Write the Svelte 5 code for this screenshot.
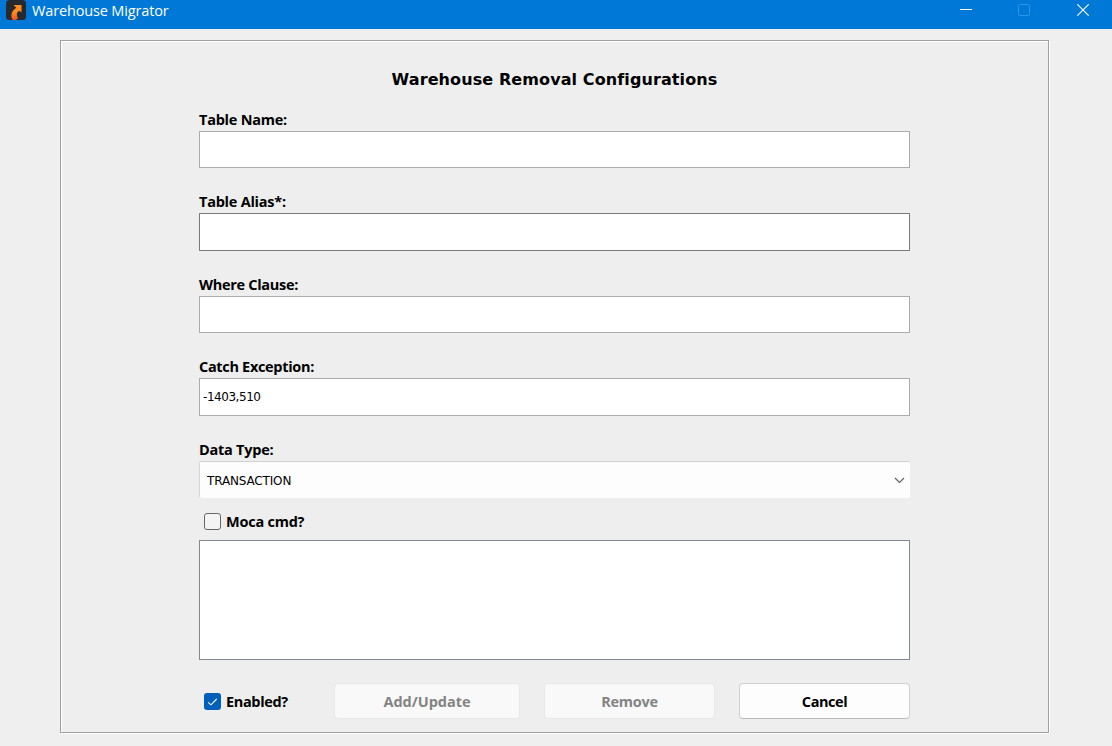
<script>
  const fields = [
    { label: 'Table Name:', value: '', height: 37, tone: '#ababab', spacing: -0.24 },
    { label: 'Table Alias*:', value: '', height: 38, tone: '#7a7a7a', spacing: -0.24 },
    { label: 'Where Clause:', value: '', height: 37, tone: '#ababab', spacing: -0.3 },
    { label: 'Catch Exception:', value: '-1403,510', height: 38, tone: '#ababab', spacing: -0.32 }
  ];
</script>

<div class="window">
  <header>
    <svg class="logo" width="20" height="20" viewBox="0 0 20 20">
      <defs>
        <linearGradient id="arrow" x1="0" y1="0" x2="0" y2="1">
          <stop offset="0.5" stop-color="#ff8a1e" />
          <stop offset="1" stop-color="#f4511e" />
        </linearGradient>
      </defs>
      <rect width="20" height="20" rx="3.5" fill="#252a31" />
      <path d="M7.5 5H15.5V12.5L13.3 10.7C10.5 12.3 10.2 14.5 12 18.5L9.3 20H7C4.5 17.5 4.5 11.5 10.3 7.8Z" fill="url(#arrow)" />
    </svg>
    <span class="app-name">Warehouse Migrator</span>
    <div class="controls">
      <svg width="12" height="12" viewBox="0 0 12 12"><path d="M0 5.5H12" stroke="#fff" /></svg>
      <svg width="12" height="12" viewBox="0 0 12 12"><rect x=".5" y=".5" width="11" height="11" rx="1" fill="none" stroke="#3395e1" /></svg>
      <svg width="12" height="12" viewBox="0 0 12 12"><path d="M.3 .3L11.7 11.7M11.7 .3L.3 11.7" stroke="#fff" stroke-width="1.1" /></svg>
    </div>
  </header>

  <main>
    <h1>Warehouse Removal Configurations</h1>
    <form>
      {#each fields as field}
        <div class="group">
          <span class="label" style:letter-spacing="{field.spacing}px">{field.label}</span>
          <div class="field" style:height="{field.height}px" style:border-color={field.tone}>{field.value}</div>
        </div>
      {/each}
      <div class="group last">
        <span class="label">Data Type:</span>
        <div class="combo">
          <span>TRANSACTION</span>
          <svg width="11" height="7" viewBox="0 0 11 7"><path d="M1 1L5.5 5.5L10 1" fill="none" stroke="#5c5c5c" stroke-width="1.1" /></svg>
        </div>
      </div>
      <div class="check moca"><i></i><span class="label">Moca cmd?</span></div>
      <div class="area"></div>
      <div class="actions">
        <div class="check enabled">
          <i class="on"><svg width="17" height="17" viewBox="0 0 17 17"><path d="M4.2 9.3L7 11.8L12.7 6" fill="none" stroke="#fff" stroke-width="1.1" /></svg></i>
          <span class="label">Enabled?</span>
        </div>
        <button type="button" class="add" disabled>Add/Update</button>
        <button type="button" disabled>Remove</button>
        <button type="button" class="cancel">Cancel</button>
      </div>
    </form>
  </main>
</div>

<style>
  :global(body) { background: #efefef; }
  * { box-sizing: border-box; }
  .window { width: 1112px; height: 746px; overflow: hidden; background: #efefef; color: #000; font-family: "Open Sans", "Noto Sans", sans-serif; }
  header { height: 29px; background: #0078d7; display: flex; align-items: flex-start; padding-left: 6px; }
  .logo { display: block; }
  .app-name { margin-left: 6px; color: #fff; font-size: 14.5px; line-height: 22px; letter-spacing: -.15px; white-space: nowrap; }
  .controls { margin-left: auto; display: flex; gap: 47px; padding: 4px 23px 0 0; }
  .controls svg { display: block; }
  .controls svg:first-child { margin-right: -1px; }
  main { width: 989px; height: 693px; margin: 11px 0 0 60px; border: 1px solid #a0a0a0; background: #eee; box-shadow: inset 1px 1px #fff, 1px 1px #fff; }
  h1 { margin: 0; height: 66px; padding-top: 29px; font: bold 16px/20px "DejaVu Sans", sans-serif; letter-spacing: .1px; text-align: center; }
  form { width: 711px; margin-left: 138px; }
  .group { margin-bottom: 21px; }
  .label { display: block; height: 24px; font-weight: 700; font-size: 14.5px; line-height: 26px; letter-spacing: -.24px; white-space: nowrap; }
  .check .label { line-height: 24px; }
  .enabled .label { letter-spacing: -.36px; }
  .group.last { margin-bottom: 5px; }
  .field { border: 1px solid; background: #fff; display: flex; align-items: center; padding-left: 3px; font: 12px "DejaVu Sans", sans-serif; letter-spacing: -.45px; }
  .combo { width: 711px; height: 37px; background: #fdfdfd; border-top: 1px solid #d0d0d0; border-left: 1px solid #d6d6d6; border-radius: 2px; display: flex; align-items: center; justify-content: space-between; padding: 1px 5px 0 7px; font: 12px "DejaVu Sans", sans-serif; letter-spacing: -.15px; }
  .combo svg { margin-bottom: 1px; }
  .check { display: flex; align-items: center; padding-left: 5px; }
  .check i { width: 17px; height: 17px; border: 1px solid #666; border-radius: 3px; background: #f4f4f4; margin-right: 5px; flex: none; }
  .check i.on { border: 0; background: #005fb8; }
  .check i svg { display: block; }
  .moca { height: 37px; }
  .area { height: 120px; background: #fff; border: 1px solid #828790; }
  .actions { display: flex; margin-top: 23px; height: 36px; }
  .enabled { width: 135px; padding-top: 1px; }
  button { width: 171px; margin: 0 0 0 24px; padding: 0; border: 1px solid #e8e8e8; border-radius: 4px; background: #f9f9f9; color: #838383; font: 700 14.5px "Open Sans", sans-serif; letter-spacing: -.3px; }
  .add { width: 186px; margin-left: 0; letter-spacing: -.03px; }
  .cancel { color: #000; background: #fdfdfd; border-color: #d0d0d0 #d0d0d0 #bbb; letter-spacing: -.45px; }
</style>
